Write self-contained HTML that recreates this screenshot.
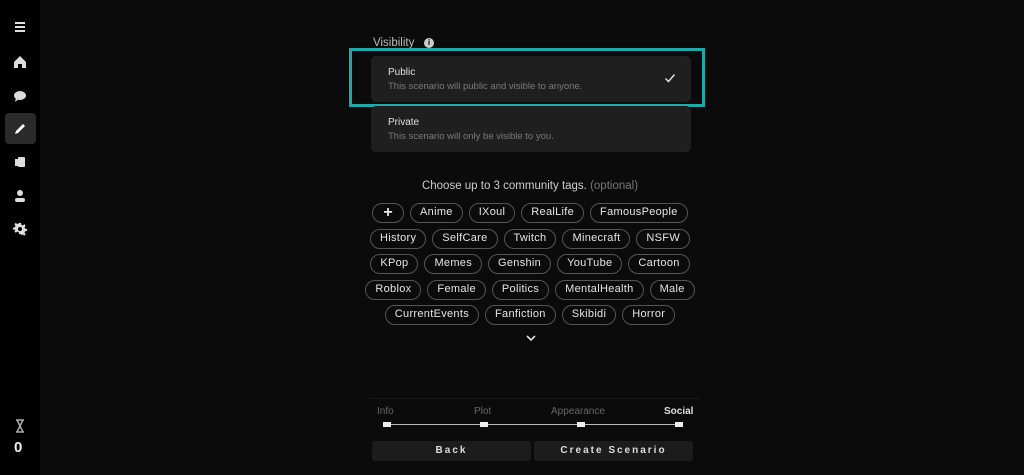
<!DOCTYPE html>
<html><head><style>
*{margin:0;padding:0;box-sizing:border-box}
body{width:1024px;height:475px;background:#0b0b0b;font-family:"Liberation Sans",sans-serif;color:#ddd;position:relative;overflow:hidden}
.side{position:absolute;left:0;top:0;width:40px;height:475px;background:#000}
.ic{position:absolute;left:12px;width:16px;height:16px}
.sel{position:absolute;left:5px;top:113px;width:31px;height:31px;background:#2a2a2a;border-radius:4px}
.card{position:absolute;left:371px;width:320px;height:46px;background:#1f1f1f;border-radius:5px}
.card .t{position:absolute;left:17px;top:11px;font-size:10px;color:#e0e0e0}
.card .s{position:absolute;left:17px;top:25px;font-size:9.5px;color:#7a7a7a}
.hl{position:absolute;left:349px;top:48px;width:356px;height:59px;border:3px solid #1fa9a9}
.row{position:absolute;left:360px;width:340px;display:flex;justify-content:center;gap:6px}
.p{height:20px;border:1.5px solid #555;border-radius:10px;font-size:11px;color:#e6e6e6;padding:0 9px;line-height:17px;letter-spacing:.3px}
.lab{position:absolute;top:406px;font-size:10px;color:#666}
.dot{position:absolute;top:422px;width:8px;height:5px;background:#eee}
.btn{position:absolute;top:441px;height:20px;background:#1c1c1c;border-radius:3px;font-size:10px;font-weight:bold;letter-spacing:2px;color:#ddd;text-align:center;line-height:20px}
</style></head><body>
<div class="side">
<svg class="ic" style="top:19px" viewBox="0 0 16 16"><path d="M3 4h10M3 8h10M3 12h10" stroke="#ddd" stroke-width="2"/></svg>
<svg class="ic" style="top:54px" viewBox="0 0 16 16"><path d="M8 2L2 8v6h4v-4h4v4h4V8z" fill="#ddd"/></svg>
<svg class="ic" style="top:88px" viewBox="0 0 16 16"><ellipse cx="8" cy="7.5" rx="6" ry="4.5" fill="#ddd"/><path d="M4 10l-1 4 4-3z" fill="#ddd"/></svg>
<div class="sel"></div>
<svg class="ic" style="top:121px" viewBox="0 0 16 16"><path d="M3 13l1-3 7-7 2 2-7 7z" fill="#fff"/></svg>
<svg class="ic" style="top:154px" viewBox="0 0 16 16"><rect x="3" y="5" width="4" height="7" fill="#ddd"/><rect x="6" y="3" width="7" height="10" rx="1" fill="#ddd"/></svg>
<svg class="ic" style="top:188px" viewBox="0 0 16 16"><circle cx="8" cy="5" r="3" fill="#ddd"/><rect x="3" y="10" width="10" height="4" rx="2" fill="#ddd"/></svg>
<svg class="ic" style="top:221px" viewBox="0 0 16 16"><path d="M7 2h2l.4 2 1.5.7 1.7-1.2 1.4 1.4-1.2 1.7.7 1.5 2 .4v2l-2 .4-.7 1.5 1.2 1.7-1.4 1.4-1.7-1.2-1.5.7L9 14H7l-.4-2-1.5-.7-1.7 1.2-1.4-1.4 1.2-1.7L2.5 9.4.5 9V7l2-.4.7-1.5L2 3.4 3.4 2l1.7 1.2 1.5-.7z" transform="translate(0.5 0) scale(.94)" fill="#ddd"/><circle cx="8" cy="8" r="2" fill="#000"/></svg>
<svg class="ic" style="top:418px" viewBox="0 0 16 16"><path d="M4 2h8M4 14h8M5 2l6 12M11 2L5 14" stroke="#aaa" stroke-width="1.5" fill="none"/></svg>
<div style="position:absolute;left:14px;top:439px;font-size:15px;font-weight:bold;color:#eee">0</div>
</div>
<div style="position:absolute;left:373px;top:37px;font-size:11.5px;color:#bbb">Visibility</div>
<div style="position:absolute;left:424px;top:38px;width:10px;height:10px;border-radius:50%;background:#ccc;color:#000;font-size:8px;font-weight:bold;text-align:center;line-height:10px">i</div>
<div class="card" style="top:56px"><div class="t">Public</div><div class="s">This scenario will public and visible to anyone.</div>
<svg style="position:absolute;left:293px;top:16px" width="12" height="12" viewBox="0 0 12 12"><path d="M1.5 6.5l3 3 6-7" stroke="#ddd" stroke-width="1.5" fill="none"/></svg></div>
<div class="hl"></div>
<div class="card" style="top:106px"><div class="t">Private</div><div class="s">This scenario will only be visible to you.</div></div>
<div style="position:absolute;left:360px;width:340px;top:180px;text-align:center;font-size:11.5px;color:#ccc">Choose up to 3 community tags. <span style="color:#777">(optional)</span></div>
<div class="row" style="top:203px"><div class="p" style="font-size:16px;padding:0 10px;font-weight:bold">+</div><div class="p">Anime</div><div class="p">IXoul</div><div class="p">RealLife</div><div class="p">FamousPeople</div></div>
<div class="row" style="top:229px"><div class="p">History</div><div class="p">SelfCare</div><div class="p">Twitch</div><div class="p">Minecraft</div><div class="p">NSFW</div></div>
<div class="row" style="top:254px"><div class="p">KPop</div><div class="p">Memes</div><div class="p">Genshin</div><div class="p">YouTube</div><div class="p">Cartoon</div></div>
<div class="row" style="top:280px"><div class="p">Roblox</div><div class="p">Female</div><div class="p">Politics</div><div class="p">MentalHealth</div><div class="p">Male</div></div>
<div class="row" style="top:305px"><div class="p">CurrentEvents</div><div class="p">Fanfiction</div><div class="p">Skibidi</div><div class="p">Horror</div></div>
<svg style="position:absolute;left:525px;top:334px" width="12" height="8" viewBox="0 0 12 8"><path d="M2 2l4 4 4-4" stroke="#ddd" stroke-width="1.6" fill="none"/></svg>
<div style="position:absolute;left:370px;top:398px;width:330px;height:1px;background:#1a1a1a"></div>
<div class="lab" style="left:377px">Info</div><div class="lab" style="left:474px">Plot</div><div class="lab" style="left:551px">Appearance</div><div class="lab" style="left:664px;color:#ddd;font-weight:bold">Social</div>
<div style="position:absolute;left:386px;top:424px;width:294px;height:1px;background:#bbb"></div>
<div class="dot" style="left:383px"></div><div class="dot" style="left:480px"></div><div class="dot" style="left:577px"></div><div class="dot" style="left:675px"></div>
<div class="btn" style="left:372px;width:159px">Back</div>
<div class="btn" style="left:534px;width:159px">Create Scenario</div>
</body></html>
